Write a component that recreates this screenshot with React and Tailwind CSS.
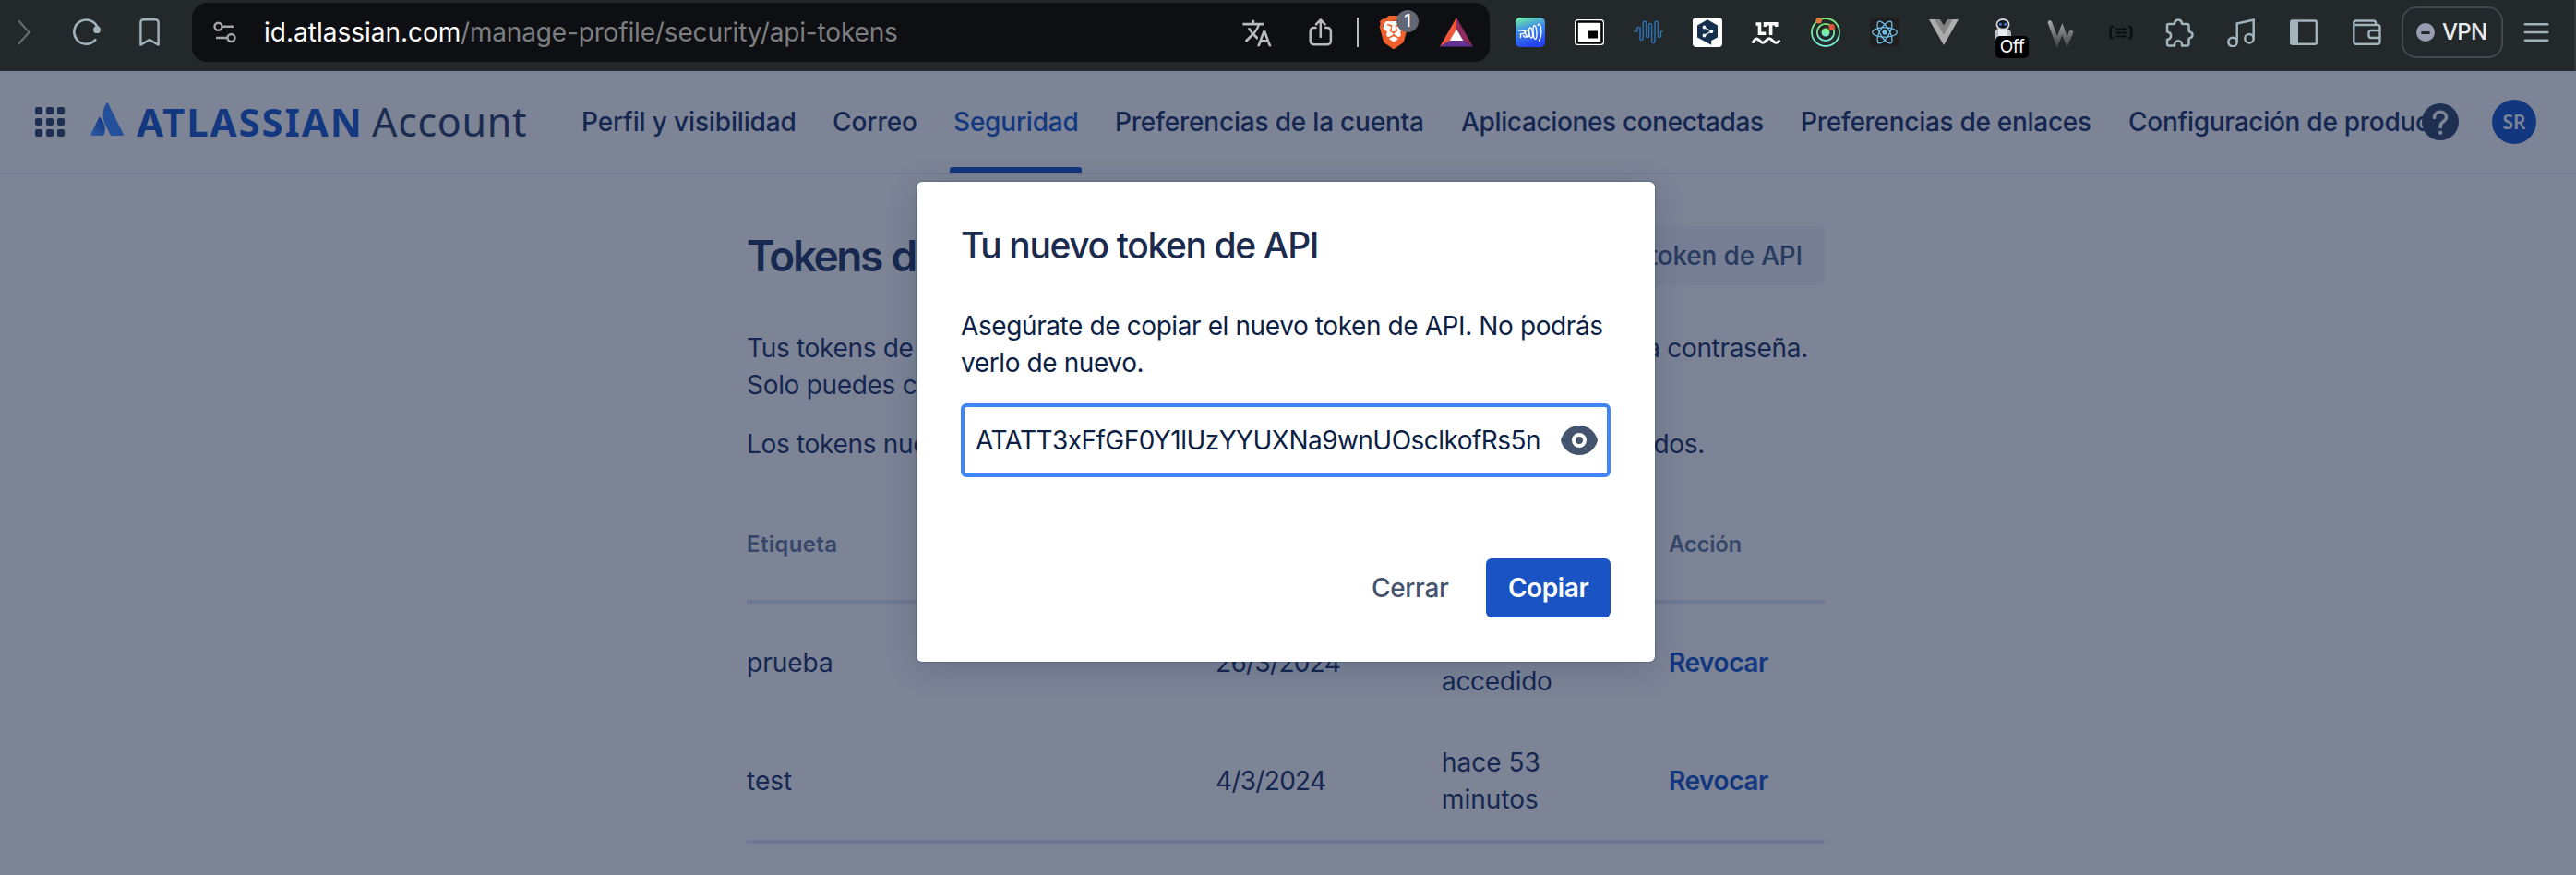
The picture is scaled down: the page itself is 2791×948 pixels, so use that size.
import { MdTranslate } from "react-icons/md";
import { SiBrave, SiReact } from "react-icons/si";

const STROKE = "#a3b3bb";

function BrowserBar() {
  return (
    <div className="flex h-[77px] shrink-0 items-center overflow-hidden border-r-2 border-[#33393b] bg-[#23282a] pb-[7px]">
      <svg className="ml-[19px] h-7 w-3.5 shrink-0" viewBox="0 0 14 28" fill="none" stroke="#656b6e" strokeWidth="2.2">
        <path d="M1 1.2 12.5 14 1 26.8" />
      </svg>
      <svg className="ml-[46px] h-[30px] w-[31px] shrink-0" viewBox="0 0 31 30" fill="none" stroke={STROKE} strokeWidth="2.6" strokeLinecap="round">
        <path d="M24.3 23.2A13.1 13.1 0 1 1 27 11" />
        <circle cx="26" cy="12.2" r="2.6" fill={STROKE} />
      </svg>
      <svg className="ml-[41px] h-[30px] w-[22px] shrink-0" viewBox="0 0 22 30" fill="none" stroke={STROKE} strokeWidth="2.4" strokeLinejoin="round">
        <path d="M1.4 28.6V4.3a3 3 0 0 1 3-3h13.2a3 3 0 0 1 3 3v24.3L11 23z" />
      </svg>

      <div className="ml-[35px] flex h-16 w-[1406px] shrink-0 items-center rounded-2xl bg-[#0e0f13]">
        <svg className="ml-[23px] h-6 w-[25px] shrink-0" viewBox="0 0 25 24" fill="none" stroke="#a5a5a7" strokeWidth="2.4">
          <circle cx="5.5" cy="5.8" r="4" />
          <circle cx="19.5" cy="18" r="4" />
          <path d="M9.5 5.8H22M3 18h12.5" />
        </svg>
        <div className="ml-[30px] flex text-[28px] leading-10">
          <span className="w-[213px] whitespace-nowrap text-white">id.atlassian.com</span>
          <span className="whitespace-nowrap tracking-[-0.16px] text-[#7d7e81]">/manage-profile/security/api-tokens</span>
        </div>
        <div className="flex-1" />
        <MdTranslate className="-mr-0.5 size-[34px] shrink-0 translate-y-px text-[#b9babb]" />
        <svg className="ml-[41px] h-8 w-[26px] shrink-0" viewBox="0 0 26 32" fill="none" stroke="#b9babb" strokeWidth="2.5" strokeLinecap="round" strokeLinejoin="round">
          <path d="M7.5 11H5.3a3.6 3.6 0 0 0-3.6 3.6v11a3.6 3.6 0 0 0 3.6 3.6h15a3.6 3.6 0 0 0 3.6-3.6v-11a3.6 3.6 0 0 0-3.6-3.6h-2.2M12.8 21V3M8 7.4 12.8 2.4l4.8 5" />
        </svg>
        <div className="ml-[26px] h-8 w-0.5 shrink-0 bg-[#b9babb]" />
        <div className="relative ml-[20px] h-9 w-9 shrink-0">
          <svg className="absolute inset-0 size-9" viewBox="0 0 36 36">
            <path d="M8 6h20l3 12-5 12-8 4-8-4-5-12z" fill="#fff" />
          </svg>
          <SiBrave className="absolute inset-0 size-9 text-[#f0602c]" />
          <div className="absolute top-[-6px] left-[21px] flex size-6 items-center justify-center rounded-full bg-[#636674] text-[18px] leading-6 font-medium text-white">1</div>
        </div>
        <svg className="ml-8 h-8 w-9 shrink-0" viewBox="0 0 36 32">
          <path d="M18 0v13L11 25 0 31.5z" fill="#f2563a" />
          <path d="M18 0v13l7 12 11 6.5z" fill="#8f2b5f" />
          <path d="M0 31.5 11 25h14l11 6.5z" fill="#643291" />
          <path d="M18 12.5 25.3 25H10.7z" fill="#fff" />
        </svg>
        <div className="w-[18px]" />
      </div>

      <div className="ml-7 flex shrink-0 items-center gap-8">
        <svg className="size-8" viewBox="0 0 32 32" fill="none">
          <defs>
            <linearGradient id="sq" x1="0.1" y1="0" x2="0.4" y2="1">
              <stop offset="0" stopColor="#6ff0a8" />
              <stop offset="0.45" stopColor="#3f8be6" />
              <stop offset="1" stopColor="#2443f0" />
            </linearGradient>
          </defs>
          <rect width="32" height="32" rx="5" fill="url(#sq)" />
          <g stroke="#fff" strokeWidth="1.4" strokeLinecap="round">
            <path d="M3.5 14h4.500c2.500 0 2.300 3.600 0 3.600H5.500V21.500M8.500 19.500c1 2.500 3 2 3.500 0" />
            <ellipse cx="12.500" cy="17.300" rx="1.700" ry="4" transform="rotate(-12 12.500 17.300)" />
            <ellipse cx="16.600" cy="16.500" rx="1.800" ry="5.500" transform="rotate(-8 16.600 16.500)" />
            <ellipse cx="21" cy="16" rx="1.900" ry="7.300" transform="rotate(-4 21 16)" />
            <path d="M24 8.500c1.500-3 3.500-.5 3.800 5 .2 5-1 9.500-2.300 11.500" />
          </g>
        </svg>
        <svg className="size-8" viewBox="0 0 32 32">
          <rect y="2" width="32" height="28" rx="3.500" fill="#fff" />
          <rect x="2.500" y="4.500" width="27" height="23" rx="1.500" fill="#fff" stroke="#000" strokeWidth="2.600" />
          <rect x="14.500" y="14.500" width="10.500" height="8" fill="#000" />
        </svg>
        <svg className="size-8" viewBox="0 0 32 32" fill="none" stroke="#2f6fae" strokeWidth="1.500" strokeLinecap="round" strokeLinejoin="round">
          <path d="M.8 15h3v-3a1.600 1.600 0 0 1 3.200 0v11a1.600 1.600 0 0 0 3.200 0V6a1.700 1.700 0 0 1 3.400 0v14a1.500 1.500 0 0 0 3 0V8a1.500 1.500 0 0 1 3 0v18a1.700 1.700 0 0 0 3.400 0V6a1.700 1.700 0 0 1 3.400 0v14a1.500 1.500 0 0 0 3 0v-5h1.800" />
        </svg>
        <svg className="size-8" viewBox="0 0 32 32">
          <rect width="32" height="32" rx="4" fill="#fff" />
          <path d="M16 2.200 27 8.400v13L20.200 25v4.800L5 21.500v-13z" fill="#15304f" />
          <g fill="#fff" stroke="#fff" strokeWidth="1.200">
            <path d="M12.500 10.500 20 15l-7.500 4.500" fill="none" />
            <circle cx="12.500" cy="10.500" r="1.300" />
            <circle cx="20.300" cy="15" r="1.500" />
            <circle cx="12.500" cy="19.500" r="1.300" />
          </g>
        </svg>
        <svg className="size-8" viewBox="0 0 32 32" fill="none" stroke="#fff" strokeWidth="3.600">
          <path d="M4.500 7h4v10.200h6.800M14.500 10V6.800h12.200V10M20.600 7v12" />
          <path d="M1.500 26.500c2.500-4.500 4.500-4.500 7-1.500s4.500 3 7 0 4.500-3 7 0 4.500 3 7 .5" strokeLinecap="round" strokeWidth="3" />
        </svg>
        <svg className="size-8" viewBox="0 0 32 32" fill="none">
          <defs>
            <linearGradient id="ring" x1="0" y1="0" x2="0" y2="1">
              <stop offset="0" stopColor="#7cea74" />
              <stop offset="1" stopColor="#77e8d8" />
            </linearGradient>
          </defs>
          <circle cx="16" cy="16" r="15" stroke="url(#ring)" strokeWidth="1.800" />
          <circle cx="16" cy="16" r="9.200" stroke="url(#ring)" strokeWidth="1.800" />
          <circle cx="16" cy="16" r="4.500" fill="url(#ring)" />
          <circle cx="8.600" cy="3.300" r="3.200" fill="#e07c3e" />
          <circle cx="22.600" cy="10.200" r="3.200" fill="#e0553a" />
        </svg>
        <div className="flex size-8 items-center justify-center rounded-[3px] bg-[#1f1f1f]">
          <SiReact className="size-7 text-[#6fc0ea]" />
        </div>
        <svg className="size-8" viewBox="0 0 32 32">
          <path d="M0 2h32L16 30z" fill="#adadad" />
          <path d="M6.300 2h19.400L16 19z" fill="#858585" />
          <path d="M12 2h8l-4 6.500z" fill="#23282a" />
        </svg>
        <div className="relative size-8">
          <svg className="size-8" viewBox="0 0 32 32">
            <path d="M7 26V17.500C7 13 10 11.500 15.500 11.500S25 13 25 17.500V26z" fill="#b9bcc2" />
            <path d="M11 13h10v13H11z" fill="#e9eaee" />
            <ellipse cx="16" cy="7.500" rx="7.500" ry="6.500" fill="#d5d7db" />
            <ellipse cx="16" cy="7.300" rx="5.800" ry="4.400" fill="#16181f" />
            <circle cx="13.400" cy="7.300" r="1.500" fill="#3e78d8" />
            <circle cx="18.600" cy="7.300" r="1.500" fill="#3e78d8" />
          </svg>
          <div className="absolute top-5 left-2 flex h-6 w-9 items-center justify-center rounded-[5px] bg-black text-[19px] leading-6 tracking-[-0.5px] text-white">Off</div>
        </div>
        <svg className="size-8" viewBox="0 0 32 32" fill="none" strokeLinecap="round" strokeWidth="4.600">
          <defs>
            <linearGradient id="wg" gradientUnits="userSpaceOnUse" x1="0" y1="3" x2="0" y2="29">
              <stop offset="0" stopColor="#a9a9a9" />
              <stop offset="1" stopColor="#4b4b4b" />
            </linearGradient>
          </defs>
          <path d="M3 5.500 10.800 26.500 16.300 12.500 21.500 26.500 26 16" stroke="url(#wg)" />
        </svg>
        <svg className="size-8" viewBox="0 0 32 32" fill="none" stroke="#0b0d0e" strokeWidth="2.200" strokeLinecap="round">
          <path d="M7 10H6.300c-1.300 0-1.500.8-1.500 1.800v2.400c0 1.200-.6 1.800-1.400 1.800.8 0 1.400.6 1.400 1.800v2.900c0 1 .2 1.800 1.500 1.800H7M25 10h.7c1.300 0 1.500.8 1.500 1.800v2.400c0 1.200.6 1.800 1.400 1.800-.8 0-1.400.6-1.400 1.800v2.900c0 1-.2 1.800-1.500 1.800H25" />
          <path d="M11 12.500h10M11 16.500h10M11 20.500h10M18.500 11.500v2M13.500 15.500v2M18.500 19.500v2" strokeWidth="1.700" />
        </svg>
      </div>

      <svg className="ml-8 size-8 shrink-0" viewBox="0 0 32 32" fill="none" stroke={STROKE} strokeWidth="2.500" strokeLinejoin="round">
        <path d="M3.500 7H9c1.200 0 1.200-.8 1.200-1.700a4 4 0 0 1 7.600 0C17.800 6.200 17.800 7 19 7h4.500a2 2 0 0 1 2 2v5c0 1.200.8 1.500 1.700 1.700a3.300 3.300 0 0 1 0 6.300c-.9.200-1.700.5-1.700 1.700V28.500a2 2 0 0 1-2 2H18v-1.300a4 4 0 0 0-8 0v1.300H4a2 2 0 0 1-2-2V24l1.500-.500a4 4 0 0 0 0-7.500L2 15.500V8.500A1.500 1.500 0 0 1 3.500 7z" />
      </svg>
      <svg className="ml-[34px] h-8 w-8 shrink-0" viewBox="0 0 32 32" fill="none" stroke={STROKE} strokeWidth="2.500">
        <circle cx="7" cy="26.500" r="4.700" />
        <circle cx="25" cy="22.800" r="4.700" />
        <path d="M11.700 26.500V6.500L29.700 2.500v20.300" />
      </svg>
      <svg className="ml-[37px] h-7 w-[30px] shrink-0" viewBox="0 0 30 28" fill="none" stroke={STROKE} strokeWidth="2.400">
        <rect x="1.200" y="1.500" width="27.600" height="25.300" rx="1.500" />
        <path d="M1.500 2h7.500v24.500H1.500z" fill={STROKE} stroke="none" />
      </svg>
      <svg className="ml-[38px] h-7 w-[31px] shrink-0" viewBox="0 0 31 28" fill="none" stroke={STROKE} strokeWidth="2.400" strokeLinejoin="round">
        <path d="M25 5V4a2.500 2.500 0 0 0-2.500-2.500h-19A2.200 2.200 0 0 0 1.300 3.700v20.800a2.200 2.200 0 0 0 2.200 2.200h23.500a2.500 2.500 0 0 0 2.500-2.500V8.500A2.500 2.500 0 0 0 27 6H2.500" />
        <path d="M29.500 12H20a2.500 2.500 0 0 0-2.500 2.500v3A2.500 2.500 0 0 0 20 20h9.500" />
      </svg>
      <div className="ml-[22px] flex h-14 w-[110px] shrink-0 items-center rounded-2xl border-2 border-[#41494d] pl-3.5">
        <div className="flex size-5 items-center justify-center rounded-full bg-[#9a9db1]">
          <div className="h-[3px] w-2.5 rounded-full bg-[#23282a]" />
        </div>
        <span className="ml-2 -translate-y-[0.5px] text-[24px] leading-8 font-medium tracking-[-0.75px] text-[#e9eaed]">VPN</span>
      </div>
      <svg className="ml-[22px] h-5 w-7 shrink-0" viewBox="0 0 28 20" stroke={STROKE} strokeWidth="2.400" strokeLinecap="round">
        <path d="M1.800 1.300h24.500M1.800 10h24.500M1.800 18.700h24.500" />
      </svg>
    </div>
  );
}

function AccountHeader() {
  return (
    <header className="flex h-28 shrink-0 items-center border-b-2 border-[#747c90] text-[28px] leading-10 font-medium text-[#152750]">
      <div className="ml-[38px] grid shrink-0 grid-cols-3 gap-1">
        {Array.from({ length: 9 }, (_, i) => (
          <div key={i} className="size-2 rounded-[2px] bg-[#1f2f52]" />
        ))}
      </div>
      <svg className="ml-7 h-9 w-9 shrink-0 -translate-y-[3px]" viewBox="0 0 36 36">
        <defs>
          <linearGradient id="al" x1="0.9" y1="0.1" x2="0.3" y2="1">
            <stop offset="0" stopColor="#13387f" />
            <stop offset="1" stopColor="#2a56a3" />
          </linearGradient>
        </defs>
        <path d="M10.500 16.300c-.5-.6-1-.5-1.400.2L.3 34.600c-.3.800 0 1.300.8 1.300h12.500c.5 0 .8-.2 1-.7 2.500-5.200 1.200-13-4.100-18.900z" fill="url(#al)" />
        <path d="M17.400.5c-5 7.900-4.700 16.700-1.400 23.400l5.700 11.300c.2.500.6.700 1.100.7h12.300c.8 0 1.100-.6.800-1.200L18.900.5c-.4-.7-1.100-.7-1.500 0z" fill="#234f9b" />
      </svg>
      <div className="ml-3.5 flex shrink-0 items-baseline">
        <span className="w-[255px] whitespace-nowrap font-['Noto_Sans'] text-[42px] font-bold tracking-[1.9px] text-[#13387f]">ATLASSIAN</span>
        <span className="w-[227px] whitespace-nowrap font-['Noto_Sans'] text-[43px] font-normal tracking-[0.68px] text-[#1b2c50]">Account</span>
      </div>
      <nav className="flex h-full items-stretch whitespace-nowrap">
        <a className="flex w-[272px] items-center tracking-[-0.15px]">Perfil y visibilidad</a>
        <a className="flex w-[127px] items-center tracking-[-0.07px]">Correo</a>
        <a className="flex w-[143px] flex-col pl-1 tracking-[-0.21px] text-[#13387f]">
          <span className="flex h-[110px] items-center">Seguridad</span>
          <span className="-mt-[5px] -ml-1 h-1.5 w-[143px] shrink-0 rounded-t-[3px] bg-[#11357c]" />
        </a>
        <a className="ml-9 flex w-[375px] items-center tracking-[-0.2px]">Preferencias de la cuenta</a>
        <a className="flex w-[368px] items-center tracking-[-0.36px]">Aplicaciones conectadas</a>
        <a className="flex w-[355px] items-center tracking-[-0.29px]">Preferencias de enlaces</a>
        <a className="flex w-[334px] items-center tracking-[-0.28px]">Configuración de produc</a>
      </nav>
      <svg className="z-10 -ml-4 size-10 shrink-0" viewBox="0 0 40 40">
        <circle cx="20" cy="20" r="20" fill="#1f2f52" />
        <path d="M13.500 15.500c0-4 3-6.300 6.500-6.300s6.500 2.300 6.500 5.800c0 4.800-6.300 4.800-6.300 9.500v1.300" fill="none" stroke="#7c8496" strokeWidth="3.600" strokeLinecap="round" />
        <circle cx="20.200" cy="31.800" r="2.200" fill="#7c8496" />
      </svg>
      <div className="ml-9 flex size-12 shrink-0 items-center justify-center rounded-full bg-[#12377f] font-['Noto_Sans'] text-[21px] font-semibold text-[#7c8496]">SR</div>
    </header>
  );
}

function TokenRow({ label, date, access }) {
  return (
    <div className="flex h-32 items-center">
      <span className="w-[508px]">{label}</span>
      <span className="w-[245px] tracking-[-0.7px]">{date}</span>
      <span className="w-[246px]">{access}</span>
      <span className="font-semibold tracking-[-0.43px] text-[#13377f]">Revocar</span>
    </div>
  );
}

function TokensPage() {
  return (
    <main className="ml-[809px] flex w-[1168px] flex-col pt-14 text-[28px] leading-10 text-[#152750]">
      <div className="flex h-16 items-center justify-between">
        <h1 className="text-[46px] font-[580] tracking-[-2.45px] text-[#17294f] [word-spacing:1.500px]">Tokens d</h1>
        <div className="flex h-16 w-[220px] items-center justify-end rounded-[6px] bg-[#777f94] px-6 font-medium tracking-[-0.2px] text-[#273a60]">token de API</div>
      </div>
      <div className="mt-12 flex justify-between tracking-[-0.31px]">
        <p className="whitespace-nowrap">
          Tus tokens de
          <br />
          Solo puedes c
        </p>
        <p className="pr-[18px] whitespace-nowrap">a contraseña.</p>
      </div>
      <div className="mt-6 flex justify-between tracking-[-0.31px]">
        <p>Los tokens nue</p>
        <p className="pr-[130px]">dos.</p>
      </div>
      <div className="mt-[49px] flex h-[104px] border-b-4 border-[#6f7892] pt-5 text-[24px] font-semibold text-[#36476a]">
        <span className="w-[999px] tracking-[0.35px]">Etiqueta</span>
        <span className="tracking-[-0.29px]">Acción</span>
      </div>
      <div className="border-b-4 border-[#6f7892]">
        <TokenRow label="prueba" date="26/3/2024" access={<span className="block pt-10 tracking-[-0.3px]">accedido</span>} />
        <TokenRow label="test" date="4/3/2024" access={<span className="block w-[130px]">hace 53 minutos</span>} />
      </div>
    </main>
  );
}

function TokenDialog() {
  return (
    <section className="absolute top-[197px] left-[993px] flex h-[520px] w-[800px] flex-col rounded-[6px] bg-white px-12 pt-[45px] text-[28px] leading-10 text-[#0c1f44] shadow-[0_0_2px_rgba(9,30,66,0.5),0_8px_36px_rgba(9,30,66,0.18)]">
      <h2 className="text-[39px] leading-[48px] font-[550] tracking-[-1.38px] text-[#1b2b4d]">Tu nuevo token de API</h2>
      <p className="mt-[43px] tracking-[-0.4px] whitespace-nowrap">
        Asegúrate de copiar el nuevo token de API. No podrás
        <br />
        verlo de nuevo.
      </p>
      <div className="mt-6 flex h-20 items-center rounded-[6px] border-4 border-[#3e86f8] pr-2.5 pl-3">
        <span className="flex-1 tracking-[-0.54px] whitespace-nowrap">ATATT3xFfGF0Y1lUzYYUXNa9wnUOsclkofRs5n</span>
        <svg className="h-8 w-10 shrink-0" viewBox="0 0 40 32">
          <path d="M20 0C9.500 0 3.500 7 .8 13.300c-.9 2.200-.9 3.200 0 5.400C3.500 25 9.500 32 20 32s16.500-7 19.200-13.300c.9-2.200.9-3.200 0-5.400C36.500 7 30.500 0 20 0z" fill="#44536e" />
          <circle cx="20" cy="16" r="6" fill="none" stroke="#fff" strokeWidth="4" />
        </svg>
      </div>
      <div className="mt-[88px] flex items-center justify-end font-medium">
        <button className="h-16 w-[100px] text-left tracking-[-0.35px] text-[#44546f]">Cerrar</button>
        <button className="ml-6 h-16 w-[135px] rounded-[6px] bg-[#1a54c4] font-semibold tracking-[-0.41px] text-white">Copiar</button>
      </div>
    </section>
  );
}

export default function App() {
  return (
    <div className="relative flex h-[948px] w-[2791px] flex-col overflow-hidden bg-[#7c8496] font-['Inter',sans-serif]">
      <BrowserBar />
      <AccountHeader />
      <TokensPage />
      <TokenDialog />
    </div>
  );
}
